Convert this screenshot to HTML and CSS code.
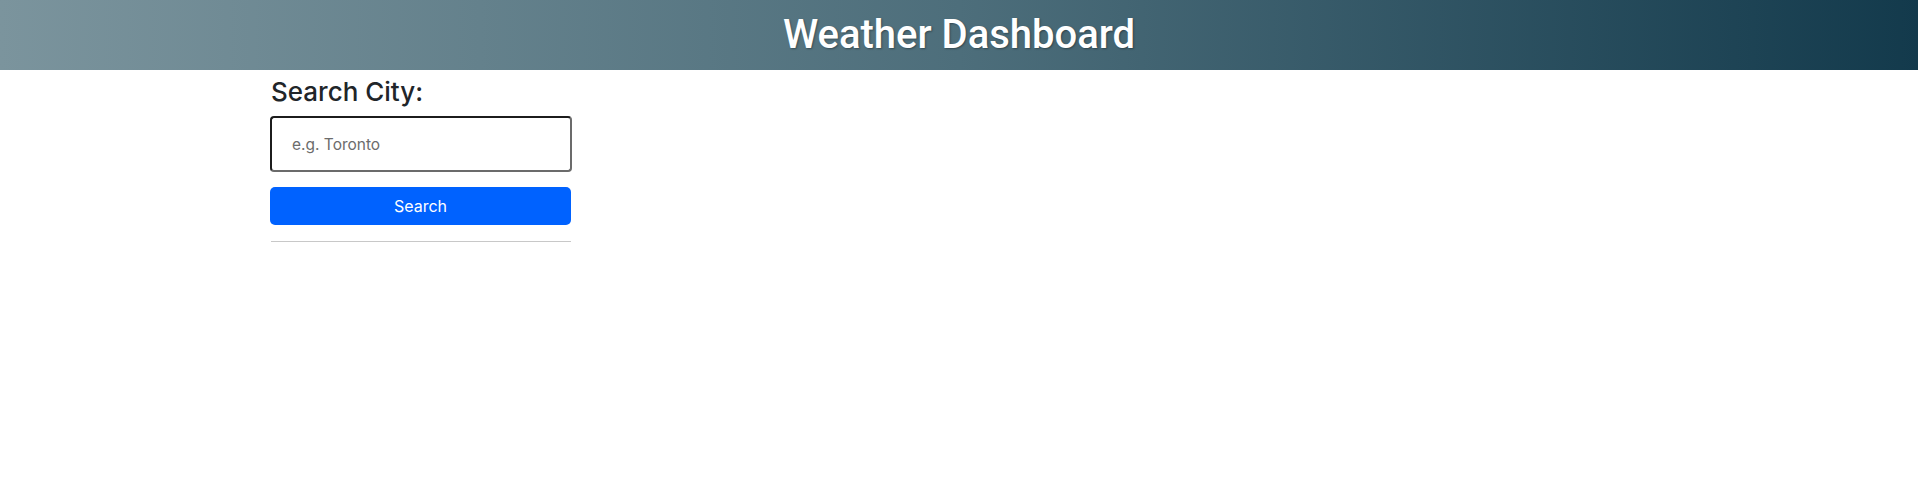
FILE: index.html
```html
<!DOCTYPE html>
<html lang="en">
<head>
<meta charset="utf-8">
<title>Weather Dashboard</title>
<link rel="stylesheet" href="styles.css">
</head>
<body>
<header class="top-bar">
  <h1 class="title">Weather Dashboard</h1>
</header>
<main class="page">
  <aside class="search-panel">
    <h3 class="search-label">Search City:</h3>
    <input class="city-input" type="text" placeholder="e.g. Toronto">
    <button class="search-btn" type="button">Search</button>
    <hr class="divider">
  </aside>
</main>
</body>
</html>
```
FILE: styles.css
```css
* { box-sizing: border-box; }
body {
  margin: 0;
  font-family: Inter, "Liberation Sans", Arial, sans-serif;
  color: #212529;
  background: #fff;
}
.top-bar {
  height: 70px;
  display: flex;
  align-items: center;
  justify-content: center;
  background: linear-gradient(to right, #7b949d 0%, #4d6e7b 50%, #133a4c 100%);
}
.title {
  margin: 0;
  color: #fff;
  font-family: Roboto, "Liberation Sans", Arial, sans-serif;
  font-size: 40px;
  font-weight: 500;
  line-height: 1.2;
  text-shadow: 1px 1px 2px rgba(0,0,0,0.35);
}
.page {
  padding-left: 270px;
}
.search-panel {
  width: 302px;
  display: flex;
  flex-direction: column;
}
.search-label {
  margin: 6px 0 0 1px;
  font-size: 26px;
  font-weight: 500;
  line-height: 1.2;
  color: #212529;
}
.city-input {
  margin-top: 9px;
  height: 56px;
  width: 302px;
  padding: 0 20px;
  font-family: inherit;
  font-size: 15.5px;
  border-style: solid;
  border-width: 2px;
  border-color: #1c1c1c #6b6b6b #6b6b6b #1c1c1c;
  border-radius: 4px;
  outline: none;
}
.city-input::placeholder { color: #6c6c6c; }
.search-btn {
  margin-top: 15px;
  height: 38px;
  width: 301px;
  border: none;
  border-radius: 5px;
  background: #0062ff;
  color: #fff;
  font-family: inherit;
  font-size: 16px;
  font-weight: 400;
}
.divider {
  margin: 16px 0 0 1px;
  width: 300px;
  border: 0;
  border-top: 1px solid #c8c8c8;
}
```
